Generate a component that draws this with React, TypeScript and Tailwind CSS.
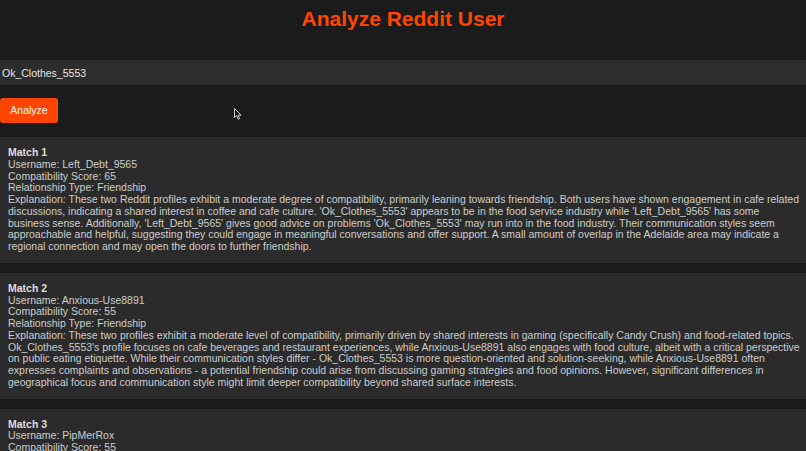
import React from 'react';

type Match = {
  username: string;
  score: number;
  type: string;
  explanation: string[];
};

// explanation lines kept as they wrap in the capture
const matches: Match[] = [
  {
    username: 'Left_Debt_9565',
    score: 65,
    type: 'Friendship',
    explanation: [
      'Explanation: These two Reddit profiles exhibit a moderate degree of compatibility, primarily leaning towards friendship. Both users have shown engagement in cafe related',
      "discussions, indicating a shared interest in coffee and cafe culture. 'Ok_Clothes_5553' appears to be in the food service industry while 'Left_Debt_9565' has some",
      "business sense. Additionally, 'Left_Debt_9565' gives good advice on problems 'Ok_Clothes_5553' may run into in the food industry. Their communication styles seem",
      'approachable and helpful, suggesting they could engage in meaningful conversations and offer support. A small amount of overlap in the Adelaide area may indicate a',
      'regional connection and may open the doors to further friendship.',
    ],
  },
  {
    username: 'Anxious-Use8891',
    score: 55,
    type: 'Friendship',
    explanation: [
      'Explanation: These two profiles exhibit a moderate level of compatibility, primarily driven by shared interests in gaming (specifically Candy Crush) and food-related topics.',
      "Ok_Clothes_5553's profile focuses on cafe beverages and restaurant experiences, while Anxious-Use8891 also engages with food culture, albeit with a critical perspective",
      'on public eating etiquette. While their communication styles differ - Ok_Clothes_5553 is more question-oriented and solution-seeking, while Anxious-Use8891 often',
      'expresses complaints and observations - a potential friendship could arise from discussing gaming strategies and food opinions. However, significant differences in',
      'geographical focus and communication style might limit deeper compatibility beyond shared surface interests.',
    ],
  },
  {
    username: 'PipMerRox',
    score: 55,
    type: 'Friendship',
    explanation: [],
  },
];

const MatchCard = ({ match, index }: { match: Match; index: number }) => (
  <div className="bg-[#2b2b2b] px-[8px] py-[10px] text-[10.5px] leading-[11.75px] text-[#cdcdcd]">
    <p className="font-bold text-[#dedede]">Match {index + 1}</p>
    <p>Username: {match.username}</p>
    <p>Compatibility Score: {match.score}</p>
    <p>Relationship Type: {match.type}</p>
    {match.explanation.length > 0 && (
      <p>
        {match.explanation.map((line) => (
          <span key={line} className="block whitespace-nowrap">
            {line}
          </span>
        ))}
      </p>
    )}
  </div>
);

export default function App() {
  return (
    <div className="relative min-h-screen overflow-hidden bg-[#1b1b1b] font-['Liberation_Sans',Arial,sans-serif]">
      <h1 className="pt-[7px] text-center text-[21px] font-bold leading-[24px] text-[#ff4500]">
        Analyze Reddit User
      </h1>

      <input
        readOnly
        value="Ok_Clothes_5553"
        className="mt-[29px] block h-[25px] w-full bg-[#2d2d2d] px-[2px] text-[10.5px] text-[#e4e4e4] outline-none"
      />

      <button className="mt-[13px] block h-[25px] w-[58px] rounded-[3px] bg-[#ff4500] text-[10.5px] text-white">
        Analyze
      </button>

      <div className="mt-[14px] flex flex-col gap-[10px]">
        {matches.map((m, i) => (
          <MatchCard key={m.username} match={m} index={i} />
        ))}
      </div>

      {/* mouse pointer left in the capture */}
      <svg className="absolute left-[234px] top-[108px]" width="8" height="12" viewBox="0 0 8 12">
        <path d="M0.5 0.5 L0.5 9.5 L2.6 7.6 L4.2 11.2 L5.6 10.6 L4.1 7.1 L7 7.1 Z" fill="#111" stroke="#e6e6e6" strokeWidth="0.9" />
      </svg>
    </div>
  );
}
